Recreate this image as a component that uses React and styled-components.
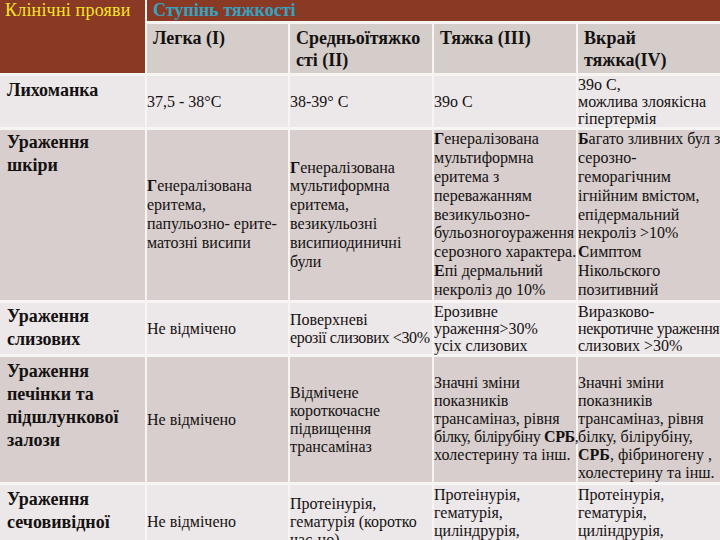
import React from 'react';
import styled, { createGlobalStyle } from 'styled-components';

const SERIF = '"Liberation Serif", "Times New Roman", "DejaVu Serif", serif';

const GlobalStyle = createGlobalStyle`
  html, body {
    margin: 0;
    padding: 0;
    background: #ffffff;
  }
  body {
    width: 720px;
    height: 540px;
    overflow: hidden;
    font-family: ${SERIF};
  }
`;

const BROWN = '#8a3924';
const LINE = '#f7f4f4';
const TONES = {
  head: '#d4cdca',
  light: '#ece7e8',
  dark: '#d7cecd',
};

const Sheet = styled.table`
  width: 720px;
  table-layout: fixed;
  border-collapse: separate;
  border-spacing: 0;
  color: #141111;
  font-family: ${SERIF};
`;

const Col = styled.col`
  width: ${(p) => p.$w}px;
`;

const Row = styled.tr`
  height: ${(p) => p.$h}px;
`;

const BaseCell = styled.td`
  box-sizing: border-box;
  padding: 0;
  font-family: ${SERIF};
  border-right: 2px solid ${LINE};
  border-bottom: 3px solid ${LINE};
  white-space: nowrap;
  overflow: visible;
  &:last-child {
    border-right: none;
  }
`;

// "Клінічні прояви" — brown corner over two header rows
const CornerCell = styled(BaseCell)`
  background: ${BROWN};
  color: #f4e526;
  font-size: 18px;
  line-height: 21px;
  vertical-align: top;
  padding-left: 5px;
  letter-spacing: 0.2px;
`;

const SpanHead = styled(BaseCell)`
  background: ${BROWN};
  color: #3aa3b4;
  font-size: 18px;
  font-weight: bold;
  line-height: 21px;
  vertical-align: top;
  padding-left: 6px;
  text-shadow: 0 0 1px rgba(80, 90, 200, 0.5);
`;

const HeadCell = styled(BaseCell)`
  background: ${TONES.head};
  font-size: 18px;
  font-weight: bold;
  line-height: 22px;
  vertical-align: top;
  padding: 3px 0 0 6px;
`;

const TitleCell = styled(BaseCell)`
  background: ${(p) => TONES[p.$tone]};
  font-size: 18px;
  font-weight: bold;
  line-height: 23px;
  vertical-align: top;
  padding: ${(p) => p.$top ?? 3}px 0 0 7px;
`;

const DataCell = styled(BaseCell)`
  background: ${(p) => TONES[p.$tone]};
  font-size: 16px;
  line-height: ${(p) => p.$lh || 18}px;
  vertical-align: ${(p) => (p.$top != null ? 'top' : 'middle')};
  padding-top: ${(p) => p.$top || 0}px;
`;

const Strong = styled.b`
  font-weight: bold;
`;

// a line squeezed a little so it stops at the next column, as in the slide
const Tight = styled.span`
  letter-spacing: -0.35px;
`;

const Lines = ({ items }) =>
  items.map((line, i) => (
    <React.Fragment key={i}>
      {i > 0 && <br />}
      {line}
    </React.Fragment>
  ));

const First = ({ text }) => (
  <>
    <Strong>{text[0]}</Strong>
    {text.slice(1)}
  </>
);

export default function App() {
  return (
    <>
      <GlobalStyle />
      <Sheet>
        <colgroup>
          <Col $w={147} />
          <Col $w={143} />
          <Col $w={144} />
          <Col $w={144} />
          <Col $w={142} />
        </colgroup>
        <tbody>
          <Row $h={24}>
            <CornerCell rowSpan={2}>Клінічні прояви</CornerCell>
            <SpanHead colSpan={4}>Ступінь тяжкості</SpanHead>
          </Row>
          <Row $h={52}>
            <HeadCell>Легка (I)</HeadCell>
            <HeadCell>
              <Lines items={['Средньоїтяжко', 'сті (II)']} />
            </HeadCell>
            <HeadCell>Тяжка (III)</HeadCell>
            <HeadCell>
              <Lines items={['Вкрай', 'тяжка(IV)']} />
            </HeadCell>
          </Row>

          <Row $h={54}>
            <TitleCell $tone="light">Лихоманка</TitleCell>
            <DataCell $tone="light">37,5 - 38°C</DataCell>
            <DataCell $tone="light">38-39° C</DataCell>
            <DataCell $tone="light">39o C</DataCell>
            <DataCell $tone="light" $lh={17}>
              <Lines items={['39o C,', 'можлива злоякісна', 'гіпертермія']} />
            </DataCell>
          </Row>

          <Row $h={173}>
            <TitleCell $tone="dark" $top={1}>
              <Lines items={['Ураження', 'шкіри']} />
            </TitleCell>
            <DataCell $tone="dark" $lh={18.8}>
              <Lines
                items={[
                  <First text="Генералізована" />,
                  'еритема,',
                  'папульозно- ерите-',
                  'матозні висипи',
                ]}
              />
            </DataCell>
            <DataCell $tone="dark" $lh={18.8}>
              <Lines
                items={[
                  <First text="Генералізована" />,
                  'мультиформна',
                  'еритема,',
                  'везикульозні',
                  'висипиодиничні',
                  'були',
                ]}
              />
            </DataCell>
            <DataCell $tone="dark" $lh={18.8}>
              <Lines
                items={[
                  <First text="Генералізована" />,
                  'мультиформна',
                  'еритема з',
                  'переважанням',
                  'везикульозно-',
                  'бульозногоураження',
                  'серозного характера.',
                  <First text="Епі дермальний" />,
                  'некроліз до 10%',
                ]}
              />
            </DataCell>
            <DataCell $tone="dark" $lh={18.8}>
              <Lines
                items={[
                  <First text="Багато зливних бул з" />,
                  'серозно-',
                  'геморагічним',
                  'ігнійним вмістом,',
                  'епідермальний',
                  'некроліз >10%',
                  <First text="Симптом" />,
                  'Нікольского',
                  'позитивний',
                ]}
              />
            </DataCell>
          </Row>

          <Row $h={54}>
            <TitleCell $tone="light" $top={2}>
              <Lines items={['Ураження', 'слизових']} />
            </TitleCell>
            <DataCell $tone="light">Не відмічено</DataCell>
            <DataCell $tone="light">
              <Lines items={['Поверхневі', <Tight>ерозії слизових &lt;30%</Tight>]} />
            </DataCell>
            <DataCell $tone="light" $lh={17}>
              <Lines items={['Ерозивне', 'ураження>30%', 'усіх слизових']} />
            </DataCell>
            <DataCell $tone="light" $lh={17}>
              <Lines
                items={['Виразково-', <Tight>некротичне ураження</Tight>, 'слизових >30%']}
              />
            </DataCell>
          </Row>

          <Row $h={126}>
            <TitleCell $tone="dark">
              <Lines items={['Ураження', 'печінки та', 'підшлункової', 'залози']} />
            </TitleCell>
            <DataCell $tone="dark">Не відмічено</DataCell>
            <DataCell $tone="dark">
              <Lines items={['Відмічене', 'короткочасне', 'підвищення', 'трансаміназ']} />
            </DataCell>
            <DataCell $tone="dark" $top={17}>
              <Lines
                items={[
                  'Значні зміни',
                  'показників',
                  'трансаміназ, рівня',
                  <Tight>
                    білку, білірубіну <Strong>СРБ</Strong>,
                  </Tight>,
                  'холестерину та інш.',
                ]}
              />
            </DataCell>
            <DataCell $tone="dark" $top={17}>
              <Lines
                items={[
                  'Значні зміни',
                  'показників',
                  'трансаміназ, рівня',
                  'білку, білірубіну,',
                  <>
                    <Strong>СРБ</Strong>, фібриногену ,
                  </>,
                  'холестерину та інш.',
                ]}
              />
            </DataCell>
          </Row>

          <Row $h={77}>
            <TitleCell $tone="light">
              <Lines items={['Ураження', 'сечовивідної', 'системи']} />
            </TitleCell>
            <DataCell $tone="light">Не відмічено</DataCell>
            <DataCell $tone="light">
              <Lines items={['Протеінурія,', 'гематурія (коротко', 'час-но)']} />
            </DataCell>
            <DataCell $tone="light">
              <Lines items={['Протеінурія,', 'гематурія,', 'циліндрурія,', 'лейкоцитурія']} />
            </DataCell>
            <DataCell $tone="light">
              <Lines items={['Протеінурія,', 'гематурія,', 'циліндрурія,', 'лейкоцитурія']} />
            </DataCell>
          </Row>
        </tbody>
      </Sheet>
    </>
  );
}
